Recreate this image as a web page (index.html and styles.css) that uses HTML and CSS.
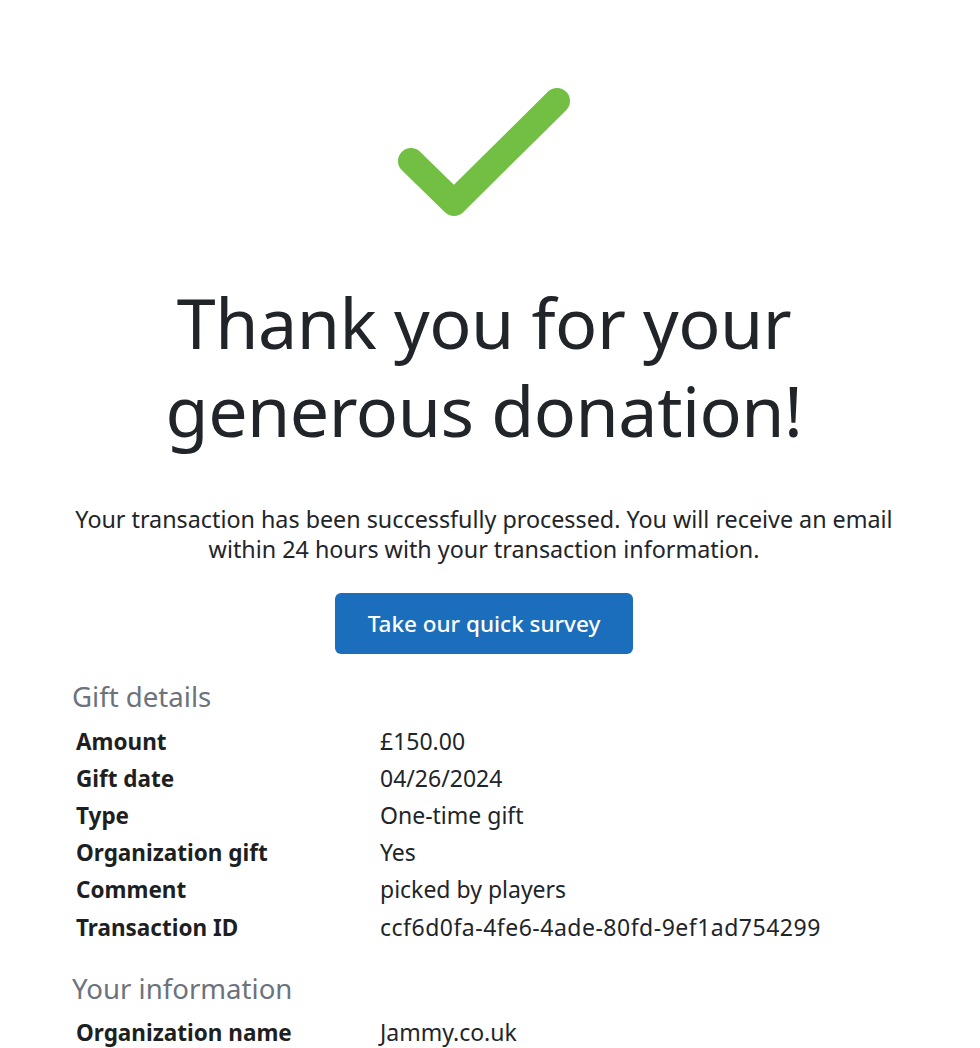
FILE: index.html
```html
<!DOCTYPE html>
<html lang="en">
<head>
<meta charset="utf-8">
<title>Thank you</title>
<link rel="stylesheet" href="styles.css">
</head>
<body>
<main class="page">
  <div class="check">
    <svg width="190" height="150" viewBox="0 0 190 150" aria-hidden="true">
      <polyline points="30,80 73,122 176,20" fill="none" stroke="#72bf44" stroke-width="26" stroke-linecap="round" stroke-linejoin="round"/>
    </svg>
  </div>
  <h1 class="title">Thank you for your generous donation!</h1>
  <p class="lead">Your transaction has been successfully processed. You will receive an email within 24 hours with your transaction information.</p>
  <div class="cta"><a class="btn" href="#">Take our quick survey</a></div>

  <section class="section">
    <h2 class="section-title">Gift details</h2>
    <dl class="details">
      <dt>Amount</dt><dd>£150.00</dd>
      <dt>Gift date</dt><dd>04/26/2024</dd>
      <dt>Type</dt><dd>One-time gift</dd>
      <dt>Organization gift</dt><dd>Yes</dd>
      <dt>Comment</dt><dd>picked by players</dd>
      <dt>Transaction ID</dt><dd class="mono-ish">ccf6d0fa-4fe6-4ade-80fd-9ef1ad754299</dd>
    </dl>
  </section>

  <section class="section">
    <h2 class="section-title">Your information</h2>
    <dl class="details">
      <dt>Organization name</dt><dd>Jammy.co.uk</dd>
    </dl>
  </section>
</main>
</body>
</html>
```
FILE: styles.css
```css
* { box-sizing: border-box; }
html, body { margin: 0; padding: 0; background: #fff; }
body {
  font-family: "Noto Sans", "Open Sans", sans-serif;
  color: #212529;
}
.page {
  width: 980px;
  padding: 0 84px 0 72px;
}
.check {
  display: flex;
  justify-content: center;
  padding-top: 81px;
}
.check svg { display: block; margin-left: -16px; }
.title {
  margin: 47px auto 0;
  font-weight: 400;
  font-size: 70px;
  line-height: 88px;
  text-align: center;
  letter-spacing: -0.5px;
  width: 700px;
}
.lead {
  margin: 50px auto 0;
  max-width: 850px;
  font-size: 23.3px;
  line-height: 30px;
  text-align: center;
}
.cta {
  display: flex;
  justify-content: center;
  margin-top: 29px;
}
.btn {
  display: inline-flex;
  align-items: center;
  justify-content: center;
  width: 298px;
  height: 61px;
  background: #1b6ebb;
  color: #fff;
  text-decoration: none;
  border-radius: 6px;
  font-size: 22.5px;
  font-weight: 500;
}
.section { margin-top: 24px; }
.section-title {
  margin: 0 0 8.5px;
  font-size: 27.6px;
  font-weight: 400;
  line-height: 36px;
  color: #6c737c;
}
.details {
  display: grid;
  grid-template-columns: 304px 1fr;
  margin: 0;
  padding-left: 4px;
  font-size: 22.5px;
  line-height: 37.2px;
}
.details dt { font-weight: 700; color: #1e1f22; }
.details dd { margin: 0; color: #212529; font-size: 23px; }
.details .mono-ish { letter-spacing: 0.5px; }
```
